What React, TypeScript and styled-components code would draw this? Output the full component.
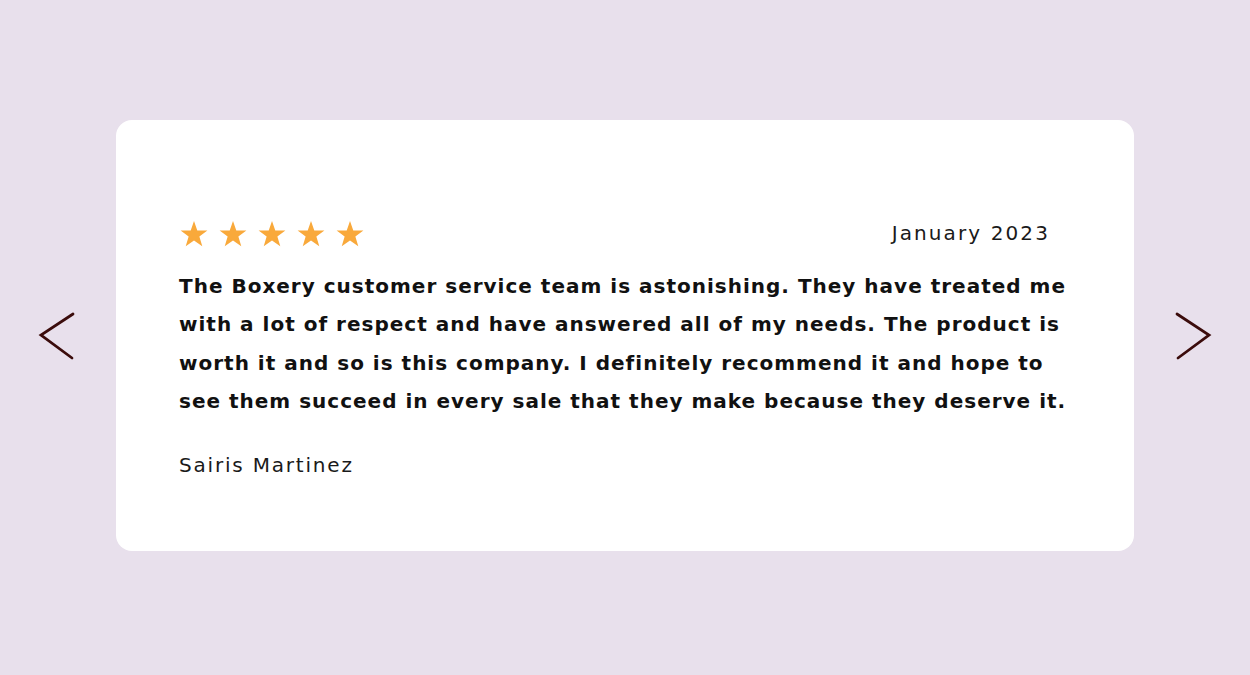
import React from "react";
import styled, { createGlobalStyle } from "styled-components";

const GlobalStyle = createGlobalStyle`
  html, body {
    margin: 0;
    padding: 0;
    background: #e8e0ec;
  }
  body {
    font-family: "DejaVu Sans", "Liberation Sans", sans-serif;
  }
`;

export const Page = styled.div`
  display: flex;
  align-items: center;
  justify-content: center;
  height: 675px;
  padding-bottom: 4px;
  box-sizing: border-box;
`;

export const ArrowButton = styled.button`
  display: flex;
  align-items: center;
  justify-content: center;
  width: 116px;
  height: 60px;
  padding: 0;
  border: none;
  background: transparent;
  cursor: pointer;
`;

export const Card = styled.div`
  width: 1018px;
  height: 431px;
  box-sizing: border-box;
  background: #ffffff;
  border-radius: 16px;
  padding: 99px 63px 0 63px;
`;

export const Header = styled.div`
  display: flex;
  align-items: center;
  justify-content: space-between;
  padding-right: 23px;
  height: 30px;
`;

export const Stars = styled.div`
  display: flex;
  gap: 9px;
`;

export const DateText = styled.span`
  font-size: 20px;
  letter-spacing: 2.1px;
  color: #1a1a1a;
  margin-top: -3px;
  margin-right: -2px;
`;

export const Quote = styled.p`
  margin: 18px 0 0 0;
  font-size: 20px;
  font-weight: 700;
  letter-spacing: 1px;
  line-height: 38.4px;
  color: #111111;
`;

export const Author = styled.div`
  margin-top: 32px;
  font-size: 20px;
  letter-spacing: 1.8px;
  color: #1a1a1a;
`;

const Star = () => (
  <svg width="30" height="28" viewBox="0 0 24 23">
    <polygon
      points="12,0.8 14.7,8.6 23,8.7 16.4,13.6 18.8,21.6 12,16.8 5.2,21.6 7.6,13.6 1,8.7 9.3,8.6"
      fill="#f9a93b"
    />
  </svg>
);

const Chevron = ({ dir }: { dir: "left" | "right" }) => (
  <svg width="40" height="50" viewBox="0 0 40 50">
    <polyline
      points={dir === "left" ? "35,3 3,24 34,47" : "5,3 37,24 6,47"}
      fill="none"
      stroke="#3b0c0c"
      strokeWidth="2.8"
      strokeLinecap="round"
      strokeLinejoin="miter"
    />
  </svg>
);

const App = () => {
  return (
    <>
      <GlobalStyle />
      <Page>
        <ArrowButton aria-label="Previous">
          <Chevron dir="left" />
        </ArrowButton>
        <Card>
          <Header>
            <Stars>
              {[0, 1, 2, 3, 4].map((i) => (
                <Star key={i} />
              ))}
            </Stars>
            <DateText>January 2023</DateText>
          </Header>
          <Quote>
            The Boxery customer service team is astonishing. They have treated me
            with a lot of respect and have answered all of my needs. The product is
            worth it and so is this company. I definitely recommend it and hope to
            see them succeed in every sale that they make because they deserve it.
          </Quote>
          <Author>Sairis Martinez</Author>
        </Card>
        <ArrowButton aria-label="Next">
          <Chevron dir="right" />
        </ArrowButton>
      </Page>
    </>
  );
};

export default App;
